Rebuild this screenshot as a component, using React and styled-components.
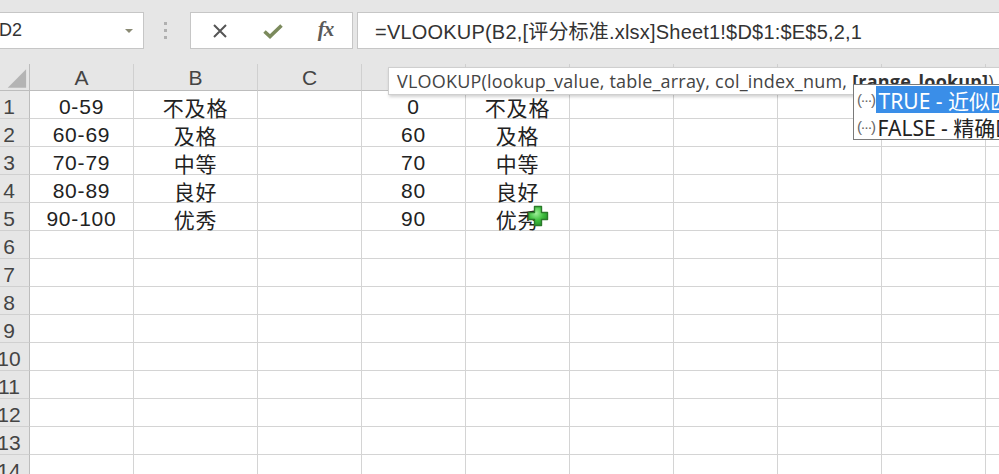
import React from 'react'
import styled, { createGlobalStyle } from 'styled-components'

const COLS = ['A', 'B', 'C', 'D', 'E', 'F', 'G', 'H', 'I', 'J']
const WIDTHS = [104, 124, 104, 104, 104, 104, 104, 104, 104, 104]

const DATA = {
  1: { A: '0-59', B: '不及格', D: '0', E: '不及格' },
  2: { A: '60-69', B: '及格', D: '60', E: '及格' },
  3: { A: '70-79', B: '中等', D: '70', E: '中等' },
  4: { A: '80-89', B: '良好', D: '80', E: '良好' },
  5: { A: '90-100', B: '优秀', D: '90', E: '优秀' },
}

const ROWS = Array.from({ length: 14 }, (_, i) => i + 1)

function App() {
  return (
    <>
      <GlobalStyle />
      <Screen>
        <FormulaBar>
          <NameBox>
            <span>D2</span>
            <DropArrow />
          </NameBox>
          <Grip>
            <i /><i /><i />
          </Grip>
          <ButtonGroup>
            <IconSlot>
              <svg width="16" height="16" viewBox="0 0 16 16">
                <path d="M2 2 L14 14 M14 2 L2 14" stroke="#555" strokeWidth="2" fill="none" />
              </svg>
            </IconSlot>
            <IconSlot>
              <svg width="20" height="16" viewBox="0 0 20 16">
                <path d="M1.5 8.5 L7 13.5 L18.5 2.5" stroke="#7b8a5c" strokeWidth="3.6" fill="none" />
              </svg>
            </IconSlot>
            <IconSlot>
              <Fx>fx</Fx>
            </IconSlot>
          </ButtonGroup>
          <FormulaInput>=VLOOKUP(B2,[评分标准.xlsx]Sheet1!$D$1:$E$5,2,1</FormulaInput>
        </FormulaBar>

        <Sheet>
          <Corner>
            <svg width="30" height="27" viewBox="0 0 30 27">
              <polygon points="8,24 27,24 27,5" fill="#b4b4b4" />
            </svg>
          </Corner>
          {COLS.map((c) => (
            <ColHead key={c}>{c}</ColHead>
          ))}
          {ROWS.map((r) => (
            <React.Fragment key={r}>
              <RowHead>{r}</RowHead>
              {COLS.map((c) => (
                <Cell key={c}>{DATA[r] && DATA[r][c]}</Cell>
              ))}
            </React.Fragment>
          ))}
        </Sheet>

        <Tooltip>
          VLOOKUP(lookup_value, table_array, col_index_num, <b>[range_lookup]</b>)
        </Tooltip>

        <Dropdown>
          <Option $active>
            <Ellipsis>(···)</Ellipsis>
            <OptionText $active>TRUE - 近似匹配</OptionText>
          </Option>
          <Option>
            <Ellipsis>(···)</Ellipsis>
            <OptionText>FALSE - 精确匹配</OptionText>
          </Option>
        </Dropdown>

        <Cursor>
          <svg width="24" height="24" viewBox="0 0 24 24">
            <defs>
              <radialGradient id="g" cx="40%" cy="35%" r="70%">
                <stop offset="0%" stopColor="#9ff09a" />
                <stop offset="55%" stopColor="#3fbf3f" />
                <stop offset="100%" stopColor="#23902a" />
              </radialGradient>
            </defs>
            <path
              d="M8.5 2.5 H15.5 V8.5 H21.5 V15.5 H15.5 V21.5 H8.5 V15.5 H2.5 V8.5 H8.5 Z"
              fill="url(#g)"
              stroke="#2a7a2a"
              strokeWidth="1.4"
              strokeLinejoin="round"
            />
          </svg>
        </Cursor>
      </Screen>
    </>
  )
}

const GlobalStyle = createGlobalStyle`
  body {
    margin: 0;
    background: #fff;
  }
`

const Screen = styled.div`
  position: relative;
  width: 999px;
  height: 474px;
  overflow: hidden;
  display: flex;
  flex-direction: column;
  font-family: "Liberation Sans", "Noto Sans CJK SC", sans-serif;
  background: #fff;
`

const FormulaBar = styled.div`
  height: 64px;
  flex-shrink: 0;
  display: flex;
  align-items: flex-start;
  padding-top: 12px;
  box-sizing: border-box;
  background: #e6e6e6;
`

const NameBox = styled.div`
  width: 145px;
  height: 37px;
  margin-left: -1px;
  box-sizing: border-box;
  border: 1px solid #c6c6c6;
  background: #fff;
  display: flex;
  align-items: center;
  justify-content: space-between;
  padding: 0 10px 0 0;
  font-size: 18px;
  color: #333;
  span {
    margin-left: -1px;
  }
`

const DropArrow = styled.div`
  width: 0;
  height: 0;
  border-left: 4px solid transparent;
  border-right: 4px solid transparent;
  border-top: 4px solid #8a8a74;
`

const Grip = styled.div`
  width: 46px;
  height: 37px;
  display: flex;
  flex-direction: column;
  align-items: center;
  justify-content: center;
  gap: 4px;
  padding-right: 4px;
  box-sizing: border-box;
  i {
    width: 3px;
    height: 3px;
    background: #b0b0b0;
  }
`

const ButtonGroup = styled.div`
  width: 163px;
  height: 37px;
  box-sizing: border-box;
  border: 1px solid #c6c6c6;
  background: #fff;
  display: flex;
  padding: 0 0 0 2px;
`

const IconSlot = styled.div`
  flex: 1;
  display: flex;
  align-items: center;
  justify-content: center;
`

const Fx = styled.span`
  font-family: "Liberation Serif", serif;
  font-style: italic;
  font-weight: bold;
  font-size: 21px;
  color: #5a5a5a;
  letter-spacing: -1px;
  margin-top: -2px;
`

const FormulaInput = styled.div`
  flex: 1;
  height: 37px;
  margin-left: 4px;
  margin-right: -4px;
  box-sizing: border-box;
  border: 1px solid #c6c6c6;
  background: #fff;
  display: flex;
  align-items: center;
  padding-left: 17px;
  font-size: 20px;
  letter-spacing: 0.2px;
  color: #333;
  white-space: nowrap;
`

const Sheet = styled.div`
  display: grid;
  grid-template-columns: 30px ${WIDTHS.map((w) => w + 'px').join(' ')};
  grid-template-rows: 27px;
  grid-auto-rows: 28px;
`

const HeadBase = styled.div`
  box-sizing: border-box;
  background: #e6e6e6;
  color: #444;
  font-size: 21px;
  display: flex;
  align-items: center;
  justify-content: center;
`

const Corner = styled(HeadBase)`
  border-right: 1px solid #bdbdbd;
  border-bottom: 1px solid #bdbdbd;
  svg {
    display: block;
  }
`

const ColHead = styled(HeadBase)`
  border-right: 1px solid #d0d0d0;
  border-bottom: 1px solid #bdbdbd;
  padding-top: 2px;
`

const RowHead = styled(HeadBase)`
  border-right: 1px solid #bdbdbd;
  border-bottom: 1px solid #d0d0d0;
  padding: 4px 11px 0 0;
  white-space: nowrap;
  overflow: visible;
`

const Cell = styled.div`
  box-sizing: border-box;
  border-right: 1px solid #d4d4d4;
  border-bottom: 1px solid #d4d4d4;
  display: flex;
  align-items: center;
  justify-content: center;
  padding-top: 5px;
  font-size: 21px;
  letter-spacing: 0.8px;
  color: #222;
  white-space: nowrap;
`

const Tooltip = styled.div`
  position: absolute;
  left: 388px;
  top: 67px;
  height: 28px;
  padding: 0 30px 0 8px;
  box-sizing: border-box;
  display: flex;
  align-items: center;
  background: #fff;
  border: 1px solid #cfcfcf;
  box-shadow: 1px 2px 3px rgba(0, 0, 0, 0.18);
  font-family: "Open Sans", "Liberation Sans", sans-serif;
  font-size: 18px;
  letter-spacing: 0.2px;
  color: #444;
  white-space: nowrap;
  b {
    margin-left: 5px;
    color: #333;
  }
`

const Dropdown = styled.div`
  position: absolute;
  left: 853px;
  top: 84px;
  width: 180px;
  height: 56px;
  box-sizing: border-box;
  border: 1px solid #7a7a7a;
  background: #fff;
  display: flex;
  flex-direction: column;
  padding-top: 1px;
`

const Option = styled.div`
  height: 27px;
  display: flex;
  align-items: center;
  padding-left: 3px;
`

const Ellipsis = styled.span`
  font-family: "Liberation Sans", sans-serif;
  font-size: 15px;
  color: #666;
  width: 25px;
  letter-spacing: -1.5px;
`

const OptionText = styled.span`
  flex: 1;
  height: 100%;
  display: flex;
  align-items: center;
  padding-left: 3px;
  font-family: "Noto Sans", "Noto Sans CJK SC", sans-serif;
  font-size: 21px;
  white-space: nowrap;
  background: ${(p) => (p.$active ? '#3a8ee8' : 'transparent')};
  color: ${(p) => (p.$active ? '#fff' : '#222')};
`

const Cursor = styled.div`
  position: absolute;
  left: 526px;
  top: 204px;
  width: 24px;
  height: 24px;
  svg {
    display: block;
  }
`

export default App
